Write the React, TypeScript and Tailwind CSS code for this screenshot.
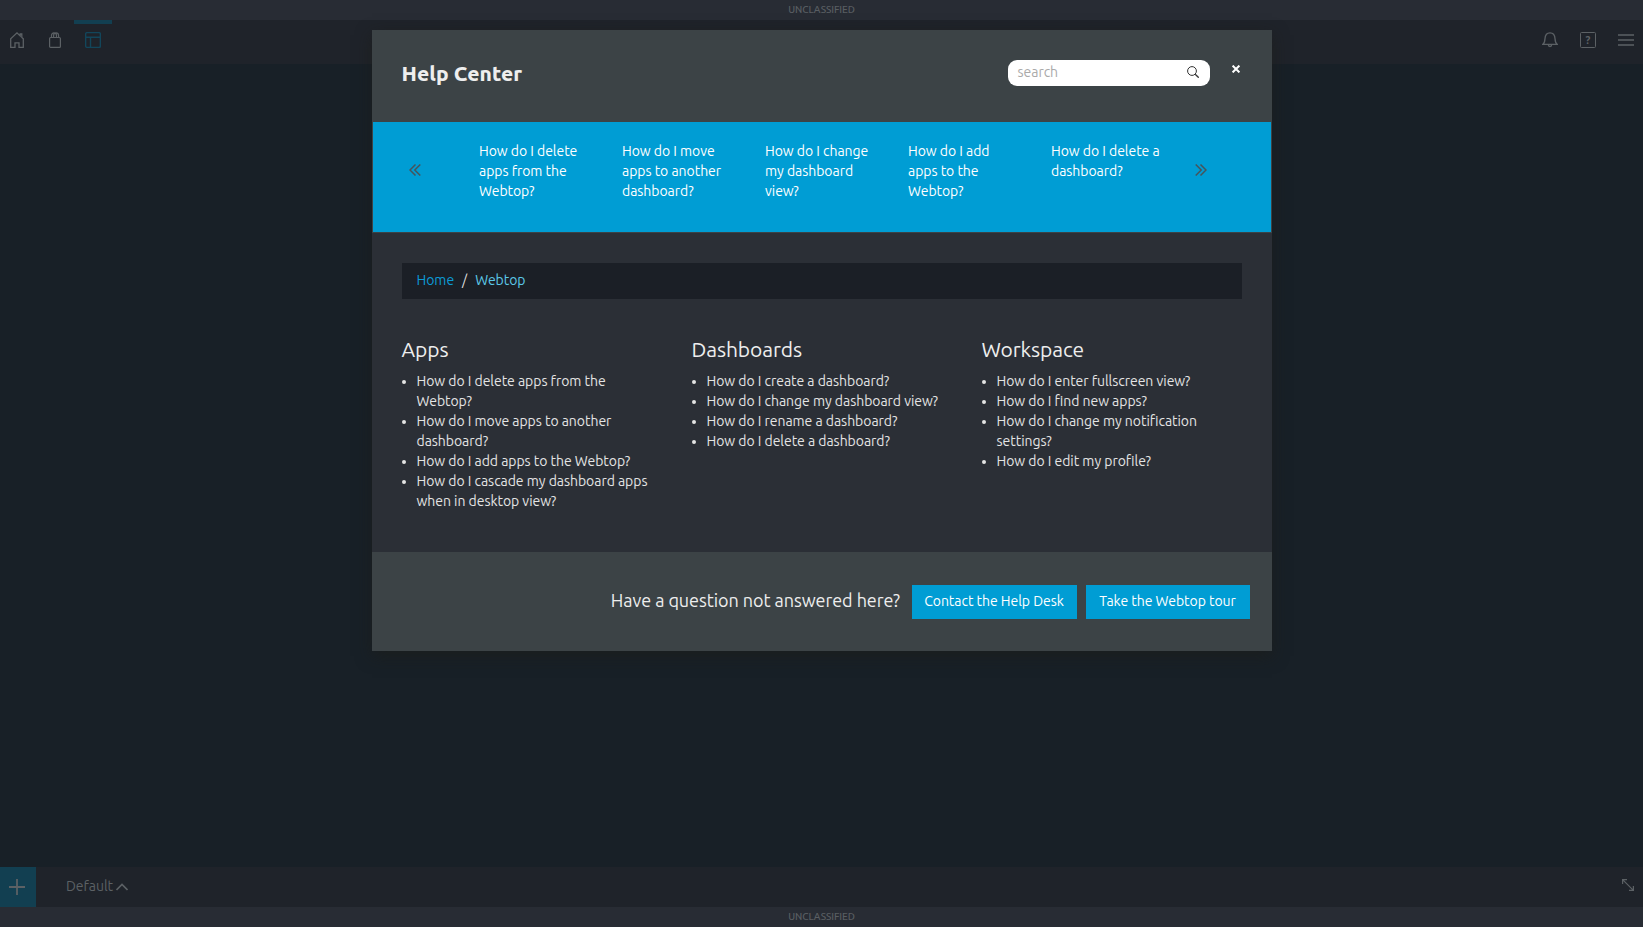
const suggestions = [
  'How do I delete apps from the Webtop?',
  'How do I move apps to another dashboard?',
  'How do I change my dashboard view?',
  'How do I add apps to the Webtop?',
  'How do I delete a dashboard?',
];

const topics = [
  {
    title: 'Apps',
    questions: [
      'How do I delete apps from the Webtop?',
      'How do I move apps to another dashboard?',
      'How do I add apps to the Webtop?',
      'How do I cascade my dashboard apps when in desktop view?',
    ],
  },
  {
    title: 'Dashboards',
    questions: [
      'How do I create a dashboard?',
      'How do I change my dashboard view?',
      'How do I rename a dashboard?',
      'How do I delete a dashboard?',
    ],
  },
  {
    title: 'Workspace',
    questions: [
      'How do I enter fullscreen view?',
      'How do I find new apps?',
      'How do I change my notification settings?',
      'How do I edit my profile?',
    ],
  },
];

const line = { fill: 'none', stroke: 'currentColor' };

function HomeIcon() {
  return (
    <svg width="16" height="16" viewBox="0 0 16 16" {...line} strokeWidth="1.3">
      <path d="M1.7 15.3V6.800L8 .9l3.200 3V2h1.600v3.400l1.500 1.400v8.500H10v-4.500H6v4.500z" />
    </svg>
  );
}

function BagIcon() {
  return (
    <svg width="12" height="16" viewBox="0 0 12 16" {...line} strokeWidth="1.2">
      <rect x=".6" y="5.500" width="10.800" height="9.900" rx="1" />
      <path d="M2.500 5.500V3.600C2.500 2 3.500.8 5 .8s2.500 1.200 2.500 2.800v1.900M4.600 5.500V3.600C4.600 2 5.600.8 7 .8s2.600 1.200 2.600 2.800v1.900" />
    </svg>
  );
}

function LayoutIcon() {
  return (
    <svg width="16" height="16" viewBox="0 0 16 16" {...line} strokeWidth="1.4">
      <rect x=".65" y=".65" width="14.7" height="14.7" rx="1.3" />
      <path d="M.6 5.3h14.8M5.5 5.3v10" />
    </svg>
  );
}

function BellIcon() {
  return (
    <svg width="16" height="16" viewBox="0 0 16 16" {...line} strokeWidth="1.3">
      <path d="M.8 12.4c1.6-1.1 2-2.6 2.2-5.8C3.200 3 5.200.8 8 .8s4.800 2.200 5 5.800c.2 3.200.6 4.700 2.200 5.800zM6.300 12.600a1.700 1.900 0 0 0 3.400 0" />
    </svg>
  );
}

function HelpIcon() {
  return (
    <span className="flex size-4 items-center justify-center rounded-[1.5px] border border-current font-['Noto_Sans',sans-serif] text-[10px] leading-none font-bold">
      ?
    </span>
  );
}

function MenuIcon() {
  return (
    <svg width="16" height="16" viewBox="0 0 16 16" {...line} strokeWidth="1.7">
      <path d="M0 3h16M0 8h16M0 13h16" />
    </svg>
  );
}

function DoubleChevron({ right }: { right?: boolean }) {
  return (
    <svg
      width="12"
      height="12"
      viewBox="0 0 12 12"
      {...line}
      strokeWidth="1.5"
      className={right ? 'rotate-180' : ''}
    >
      <path d="M6.500.5 1 6l5.500 5.500M11.300.5 5.800 6l5.500 5.500" />
    </svg>
  );
}

function Banner() {
  return (
    <div className="flex h-5 shrink-0 justify-center bg-[#282c34] text-[10px] leading-[19px] font-medium tracking-[-0.1px] text-[#595e62]">
      UNCLASSIFIED
    </div>
  );
}

function TopNav() {
  return (
    <nav className="flex h-11 shrink-0 justify-between bg-[#1f232a] text-[#5c6165]">
      <div className="flex">
        <span className="flex h-10 w-[34px] items-center justify-center">
          <HomeIcon />
        </span>
        <span className="flex h-10 w-[42px] items-center justify-center">
          <BagIcon />
        </span>
        <span className="-ml-[2px] flex h-10 w-[38px] items-center justify-center border-t-4 border-[#123f51] pb-1 text-[#12465b]">
          <LayoutIcon />
        </span>
      </div>
      <div className="flex h-10 items-center gap-[22px] pr-[9px]">
        <BellIcon />
        <HelpIcon />
        <MenuIcon />
      </div>
    </nav>
  );
}

function BottomBar() {
  return (
    <div className="flex h-10 shrink-0 items-start justify-between bg-[#1f232a] text-[#5c6165]">
      <div className="flex items-center">
        <span className="flex h-10 w-9 items-center bg-[#123f51] pl-[9px]">
          <svg width="16" height="16" viewBox="0 0 16 16" {...line} strokeWidth="1.8">
            <path d="M8 0v16M0 8h16" />
          </svg>
        </span>
        <span className="ml-[30px] pb-[2px] text-[14px] tracking-[-0.04px]">Default</span>
        <svg width="12" height="8" viewBox="0 0 12 8" {...line} strokeWidth="1.6" className="ml-[3px]">
          <path d="m.5 7 5.500-5.500L11.500 7" />
        </svg>
      </div>
      <svg width="12" height="12" viewBox="0 0 12 12" {...line} strokeWidth="1.2" className="mt-3 mr-[9px]">
        <path d="M.6 5V.6H5M.6.6l10.800 10.800M11.400 7v4.400H7" />
      </svg>
    </div>
  );
}

function HelpDialog() {
  return (
    <section
      role="dialog"
      aria-label="Help Center"
      className="flex h-[621px] w-[900px] flex-col bg-[#3c4346] tracking-[-0.04px] shadow-[0_5px_15px_rgba(28,28,24,0.6)] [font-feature-settings:'liga']"
    >
      <header className="flex h-[92px] items-start justify-between pt-[30px] pr-[32px] pl-[30px]">
        <h1 className="text-[21px] leading-[26px] font-extrabold tracking-[0.05px] text-[#eee]">Help Center</h1>
        <div className="flex">
          <label className="flex h-[26px] w-[202px] items-center justify-between rounded-[9px] bg-white pr-[11px] pl-[10px]">
            <span className="pb-[2px] text-[14px] leading-5 text-[#aaa]">search</span>
            <svg width="12" height="12" viewBox="0 0 12 12" {...line} className="mb-[2px] text-[#333]">
              <circle cx="5" cy="5" r="4.400" />
              <path d="m8.200 8.200 3.500 3.500" strokeWidth="1.3" />
            </svg>
          </label>
          <svg width="8" height="8" viewBox="0 0 8 8" {...line} strokeWidth="2" className="mt-[5px] ml-[22px] text-white">
            <path d="m.6.6 6.800 6.800M7.400.6.6 7.400" />
          </svg>
        </div>
      </header>

      <div className="mx-px flex h-[110px] bg-[#009dd4] pt-[19px] text-white">
        <span className="mt-[23px] ml-[36px] text-[#46545b]">
          <DoubleChevron />
        </span>
        <div className="ml-[58.5px] flex gap-[30px]">
          {suggestions.map((question) => (
            <p key={question} className="w-[113px] text-[14px] leading-5">
              {question}
            </p>
          ))}
        </div>
        <span className="mt-[23px] ml-[30.5px] text-[#46545b]">
          <DoubleChevron right />
        </span>
      </div>

      <div className="mt-px h-[319px] bg-[#2b2f36] px-[30px] pt-[30px]">
        <div className="flex h-9 gap-2 bg-[#1b1f26] px-[15px] pt-[7px] text-[14px] leading-5">
          <span className="text-[#0b9bd6]">Home</span>
          <span className="text-[#ddd]">/</span>
          <span className="text-[#5bc8e8]">Webtop</span>
        </div>
        <div className="mt-[38px] grid grid-cols-3 gap-[30px]">
          {topics.map(({ title, questions }) => (
            <div key={title}>
              <h2 className="text-[21px] leading-6 tracking-[-0.1px] text-[#eee]">{title}</h2>
              <ul className="mt-[10px] list-disc pl-[15px] text-[14px] leading-5 text-[#e4e4e4]">
                {questions.map((question) => (
                  <li key={question}>{question}</li>
                ))}
              </ul>
            </div>
          ))}
        </div>
      </div>

      <footer className="flex h-[99px] items-start justify-end pt-[33px] pr-[22px] text-white">
        <span className="-mt-px mr-[11.5px] text-[18px] leading-8 tracking-[-0.06px] text-[#eee]">
          Have a question not answered here?
        </span>
        <button className="h-[34px] w-[165px] bg-[#009dd4] pb-[2px] text-[14px]">
          Contact the Help Desk
        </button>
        <button className="ml-[9px] h-[34px] w-[164px] bg-[#009dd4] pb-[2px] text-[14px]">
          Take the Webtop tour
        </button>
      </footer>
    </section>
  );
}

export default function App() {
  return (
    <div className="relative flex h-[927px] w-full flex-col overflow-hidden bg-[#182027] font-['Ubuntu','Noto_Sans',sans-serif]">
      <Banner />
      <TopNav />
      <main className="flex-1" />
      <BottomBar />
      <Banner />
      <div className="absolute inset-x-0 top-[30px] flex justify-center">
        <HelpDialog />
      </div>
    </div>
  );
}
